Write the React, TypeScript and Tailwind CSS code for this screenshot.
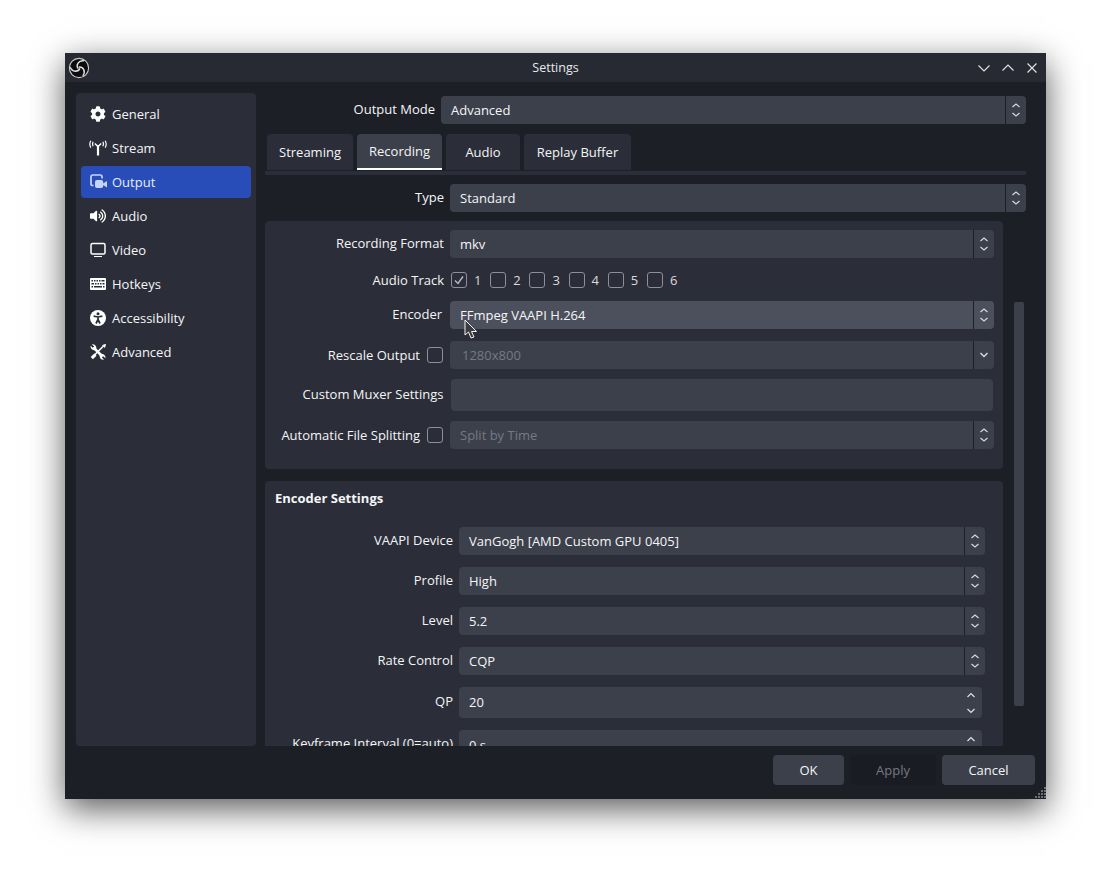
import type { ReactNode } from 'react'
import { FaCog, FaVolumeUp } from 'react-icons/fa'

function UpDown() {
  return (
    <svg width="10" height="18" viewBox="0 0 10 18" fill="none" stroke="#d6d8dc" strokeWidth="1.2">
      <path d="M1.5 6 5 3 8.5 6" />
      <path d="M1.5 12 5 15 8.5 12" />
    </svg>
  )
}

function DownOnly() {
  return (
    <svg width="10" height="8" viewBox="0 0 10 8" fill="none" stroke="#d6d8dc" strokeWidth="1.5">
      <path d="M1.5 2 5 5.5 8.5 2" />
    </svg>
  )
}

function Combo({ value, className, hover, disabled, single }: { value: string; className: string; hover?: boolean; disabled?: boolean; single?: boolean }) {
  return (
    <div className={`flex h-7 items-stretch rounded-[4px] ${hover ? 'bg-[#4c505c]' : 'bg-[#3c404b]'} ${className}`}>
      <div className={`flex-1 truncate pl-[10px] leading-[29px] ${disabled ? 'text-[#767983]' : ''}`}>{value}</div>
      <div className="flex w-[21px] items-center justify-center border-l border-[#1d1f26]">
        {single ? <DownOnly /> : <UpDown />}
      </div>
    </div>
  )
}

function Row({ label, width, className, labelPad, children }: { label: string; width: string; className?: string; labelPad?: string; children: ReactNode }) {
  return (
    <div className={`flex items-center ${className ?? ''}`}>
      <div className={`shrink-0 whitespace-nowrap text-right ${labelPad ?? 'pb-px'} ${width}`}>{label}</div>
      {children}
    </div>
  )
}

function Check({ checked }: { checked?: boolean }) {
  return (
    <div className="flex h-4 w-4 items-center justify-center rounded-[3px] border border-[#8d9099] bg-[#2b2e38]">
      {checked && (
        <svg width="12" height="12" viewBox="0 0 12 12" fill="none" stroke="#b9bbc0" strokeWidth="1.4">
          <path d="M2 6.5 5 9.5 10 2.5" />
        </svg>
      )}
    </div>
  )
}

function ObsLogo() {
  return (
    <svg width="22" height="22" viewBox="0 0 22 22">
      <circle cx="11" cy="11" r="9.6" fill="#0c0c0e" stroke="#c9cacc" strokeWidth="1.1" />
      <g fill="none" stroke="#e4e4e6" strokeWidth="1.4">
        <path d="M10.2 11.6C7.6 8 10.5 3 16 3.8" />
        <path d="M10.2 11.6C7.6 8 10.5 3 16 3.8" transform="rotate(120 11 11)" />
        <path d="M10.2 11.6C7.6 8 10.5 3 16 3.8" transform="rotate(240 11 11)" />
      </g>
    </svg>
  )
}

function StreamIcon() {
  return (
    <svg width="18" height="16" viewBox="0 0 18 16" fill="none" stroke="#fff">
      <path d="M9 5.5V15.5" strokeWidth="2.2" />
      <path d="M5.8 3.5 9 6.5 12.2 3.5" strokeWidth="1.5" />
      <path d="M4.2 1.8C3.4 3.2 3.4 4.8 4.2 6.2M1.8 0.8C0.6 3 0.6 5.6 1.8 7.6M13.8 1.8C14.6 3.2 14.6 4.8 13.8 6.2M16.2 0.8C17.4 3 17.4 5.6 16.2 7.6" strokeWidth="1.2" />
    </svg>
  )
}

function OutputIcon() {
  return (
    <svg width="17" height="16" viewBox="0 0 17 16" fill="none">
      <path d="M3.5 11.5H2.8Q1 11.5 1 9.7V2.8Q1 1 2.8 1H10.2Q12 1 12 2.8V4.5" stroke="#c6d4fb" strokeWidth="1.7" />
      <rect x="5" y="6" width="8.2" height="8" rx="2" fill="#c6d4fb" />
      <path d="M13 9.5 17 7V13.5L13 11Z" fill="#c6d4fb" />
    </svg>
  )
}

function VideoIcon() {
  return (
    <svg width="16" height="16" viewBox="0 0 16 16" fill="none" stroke="#fff">
      <rect x="1" y="1.5" width="14" height="10.5" rx="1.5" strokeWidth="1.5" />
      <path d="M4 14.5H12" strokeWidth="1" />
    </svg>
  )
}

function KeyboardIcon() {
  return (
    <svg width="16" height="12" viewBox="0 0 16 12">
      <rect width="16" height="12" rx="1" fill="#fff" />
      <g fill="#2b2e38">
        <rect x="1.5" y="2" width="1.5" height="1.5" /><rect x="4" y="2" width="1.5" height="1.5" /><rect x="6.5" y="2" width="1.5" height="1.5" /><rect x="9" y="2" width="1.5" height="1.5" /><rect x="11.5" y="2" width="3" height="1.5" />
        <rect x="1.5" y="5" width="2.5" height="1.5" /><rect x="5" y="5" width="1.5" height="1.5" /><rect x="7.5" y="5" width="1.5" height="1.5" /><rect x="10" y="5" width="1.5" height="1.5" /><rect x="12.5" y="5" width="2" height="1.5" />
        <rect x="1.5" y="8" width="1.5" height="1.5" /><rect x="4" y="8" width="8" height="1.5" /><rect x="13" y="8" width="1.5" height="1.5" />
      </g>
    </svg>
  )
}

function AccessIcon() {
  return (
    <svg width="16" height="16" viewBox="0 0 16 16">
      <circle cx="8" cy="8" r="8" fill="#fff" />
      <circle cx="8" cy="3.8" r="1.5" fill="#2b2e38" />
      <path d="M3.6 6.2 8 7 12.4 6.2M8 6.5V10M8 9.5 6 13.5M8 9.5 10 13.5" fill="none" stroke="#2b2e38" strokeWidth="1.7" />
    </svg>
  )
}

function ToolsIcon() {
  return (
    <svg width="16" height="16" viewBox="0 0 16 16" fill="none" stroke="#fff">
      <path d="M13 2.5 4 11.5" strokeWidth="1.6" />
      <path d="M15.5 0.5 14.6 3.4 12.6 1.4Z" fill="#fff" strokeWidth="1" />
      <path d="M5.4 10.6 1.8 14.2" strokeWidth="3.2" />
      <path d="M3.8 3.8 12 12" strokeWidth="2.6" />
      <path d="M5.6 6.2C3 6.8 0 4.5 0.6 1.8L2.8 3.8 4.2 2.6 2 0.4C4.8 -0.2 7 2.6 6.2 5.2ZM10.4 9.8C13 9.2 16 11.5 15.4 14.2L13.2 12.2 11.8 13.4 14 15.6C11.2 16.2 9 13.4 9.8 10.8Z" fill="#fff" stroke="none" />
    </svg>
  )
}

const navItems: { label: string; icon: ReactNode; active?: boolean }[] = [
  { label: 'General', icon: <FaCog size={16} color="#fff" /> },
  { label: 'Stream', icon: <StreamIcon /> },
  { label: 'Output', icon: <OutputIcon />, active: true },
  { label: 'Audio', icon: <FaVolumeUp size={16} color="#fff" /> },
  { label: 'Video', icon: <VideoIcon /> },
  { label: 'Hotkeys', icon: <KeyboardIcon /> },
  { label: 'Accessibility', icon: <AccessIcon /> },
  { label: 'Advanced', icon: <ToolsIcon /> },
]

const tabs = [
  { label: 'Streaming', w: 'w-[86px]' },
  { label: 'Recording', w: 'w-[85px]', active: true },
  { label: 'Audio', w: 'w-[74px]' },
  { label: 'Replay Buffer', w: 'w-[107px]' },
]

export default function App() {
  return (
    <div className="h-[876px] w-[1111px] overflow-hidden bg-white pl-[65px] pt-[53px] font-['Open_Sans',sans-serif] text-[13px] text-[#f4f5f7]">
      <div className="relative flex h-[746px] w-[981px] flex-col bg-[#1d1f26] shadow-[0_10px_32px_rgba(0,0,0,0.65)]">
        {/* Title bar */}
        <div className="flex h-[29px] shrink-0 items-center justify-between bg-[#272a33] pl-[3px] pr-[7px]">
          <div className="w-[66px]"><ObsLogo /></div>
          <span className="pt-[2px] text-[12.5px] text-[#e8e9eb]">Settings</span>
          <div className="flex items-center gap-[10px]">
            <svg width="14" height="14" viewBox="0 0 14 14" fill="none" stroke="#e4e5e7" strokeWidth="1.1"><path d="M1.5 4.5 7 10 12.5 4.5" /></svg>
            <svg width="14" height="14" viewBox="0 0 14 14" fill="none" stroke="#e4e5e7" strokeWidth="1.1"><path d="M1.5 9.5 7 4 12.5 9.5" /></svg>
            <svg width="14" height="14" viewBox="0 0 14 14" fill="none" stroke="#e4e5e7" strokeWidth="1.1"><path d="M2.5 2.5 11.5 11.5M11.5 2.5 2.5 11.5" /></svg>
          </div>
        </div>

        <div className="flex h-[664px] shrink-0">
          {/* Sidebar */}
          <div className="ml-[11px] mt-[11px] flex h-[653px] w-[180px] shrink-0 flex-col gap-[2px] rounded-[4px] bg-[#2b2e38] p-[5px]">
            {navItems.map(item => (
              <div key={item.label} className={`flex h-[32px] items-center rounded-[4px] pl-[8px] ${item.active ? 'bg-[#284cb8] text-[#e6ecff]' : ''}`}>
                <div className="flex w-[18px] justify-center">{item.icon}</div>
                <span className="ml-[5px] pt-[2px]">{item.label}</span>
              </div>
            ))}
          </div>

          {/* Right column */}
          <div className="ml-[9px] flex w-[761px] shrink-0 flex-col pt-[14px]">
            <Row label="Output Mode" width="w-[170px]">
              <Combo value="Advanced" className="ml-[6px] w-[585px]" />
            </Row>

            <div className="mt-[10px] flex gap-1 pl-[2px]">
              {tabs.map(t => (
                <div
                  key={t.label}
                  className={`flex h-[36px] items-center justify-center rounded-t-[4px] ${t.w} ${t.active ? 'border-b-2 border-white bg-[#3c404b] pt-[2px]' : 'bg-[#2b2e38] pt-[2px]'}`}
                >
                  {t.label}
                </div>
              ))}
            </div>
            <div className="mt-px h-1 bg-[#2b2e38]" />

            <Row label="Type" width="w-[179px]" className="mt-[9px]">
              <Combo value="Standard" className="ml-[6px] w-[576px]" />
            </Row>

            <div className="mt-[9px] flex h-[525px]">
              <div className="h-full w-[738px] overflow-hidden rounded-t-[4px]">
                {/* Recording group */}
                <div className="h-[248px] rounded-[4px] bg-[#2b2e38] pt-[9px]">
                  <Row label="Recording Format" width="w-[179px]">
                    <Combo value="mkv" className="ml-[6px] w-[544px]" />
                  </Row>
                  <Row label="Audio Track" width="w-[179px]" labelPad="pt-[2px]" className="mt-[14px] h-4">
                    <div className="ml-[7px] flex items-center">
                      {['1', '2', '3', '4', '5', '6'].map(n => (
                        <div key={n} className="flex w-[39.2px] items-center">
                          <Check checked={n === '1'} />
                          <span className="ml-[7px] pt-px text-[#d9dadd]">{n}</span>
                        </div>
                      ))}
                    </div>
                  </Row>
                  <Row label="Encoder" width="w-[177px]" className="mt-[13px]">
                    <Combo value="FFmpeg VAAPI H.264" hover className="ml-[8px] w-[544px]" />
                  </Row>
                  <div className="mt-3 flex items-center">
                    <Row label="Rescale Output" width="w-[155px]" labelPad="pt-px">
                      <div className="ml-[7px]"><Check /></div>
                    </Row>
                    <Combo value="1280x800" disabled single className="ml-[7px] w-[544px] pl-[2px]" />
                  </div>
                  <Row label="Custom Muxer Settings" width="w-[178.5px]" className="mt-[10px]">
                    <div className="ml-[7.5px] h-8 w-[542px] rounded-[4px] bg-[#3c404b]" />
                  </Row>
                  <div className="mt-[10px] flex items-center">
                    <Row label="Automatic File Splitting" width="w-[155px]" labelPad="pt-px">
                      <div className="ml-[7px]"><Check /></div>
                    </Row>
                    <Combo value="Split by Time" disabled className="ml-[7px] w-[544px]" />
                  </div>
                </div>

                {/* Encoder settings group */}
                <div className="mt-3 h-[300px] rounded-[4px] bg-[#2b2e38] pt-[8px]">
                  <div className="pl-[10px] font-bold leading-[18px]">Encoder Settings</div>
                  <Row label="VAAPI Device" width="w-[188px]" className="mt-[20px]">
                    <Combo value="VanGogh [AMD Custom GPU 0405]" className="ml-[6px] w-[526px]" />
                  </Row>
                  <Row label="Profile" width="w-[188px]" className="mt-3">
                    <Combo value="High" className="ml-[6px] w-[526px]" />
                  </Row>
                  <Row label="Level" width="w-[188px]" className="mt-3">
                    <Combo value="5.2" className="ml-[6px] w-[526px]" />
                  </Row>
                  <Row label="Rate Control" width="w-[188px]" className="mt-3">
                    <Combo value="CQP" className="ml-[6px] w-[526px]" />
                  </Row>
                  <Row label="QP" width="w-[188px]" className="mt-3">
                    <div className="ml-[6px] flex h-[31px] w-[523px] items-center justify-between rounded-[4px] bg-[#3c404b] pl-[10px] pr-[6px]">
                      <span>20</span>
                      <svg width="10" height="24" viewBox="0 0 10 24" fill="none" stroke="#e0e1e4" strokeWidth="1.2"><path d="M1.5 6 5 2.5 8.5 6M1.5 18 5 21.5 8.5 18" /></svg>
                    </div>
                  </Row>
                  <Row label="Keyframe Interval (0=auto)" width="w-[188px]" labelPad="pb-[3px]" className="mt-3">
                    <div className="ml-[6px] flex h-[31px] w-[523px] justify-between rounded-[4px] bg-[#3c404b] pl-[10px] pr-[6px] pt-[6px]">
                      <span>0 s</span>
                      <svg width="10" height="8" viewBox="0 0 10 8" fill="none" stroke="#e0e1e4" strokeWidth="1.2"><path d="M1.5 5 5 1.5 8.5 5" /></svg>
                    </div>
                  </Row>
                </div>
              </div>

              {/* Scrollbar */}
              <div className="pl-[11px] pt-[81px]">
                <div className="h-[404px] w-[10px] rounded-[2px] bg-[#3c404b]" />
              </div>
            </div>
          </div>
        </div>

        {/* Footer buttons */}
        <div className="flex flex-1 justify-end gap-[6px] pr-[11px] pt-[9px]">
          <div className="flex h-[30px] w-[71px] items-center justify-center rounded-[4px] bg-[#3c404b] pt-[2px]">OK</div>
          <div className="flex h-[30px] w-[86px] items-center justify-center rounded-[4px] bg-[#1a1c23] pt-[2px] text-[#767983]">Apply</div>
          <div className="flex h-[30px] w-[93px] items-center justify-center rounded-[4px] bg-[#3c404b] pt-[2px]">Cancel</div>
        </div>

        {/* Resize grip */}
        <svg className="absolute bottom-0 right-0" width="12" height="12" viewBox="0 0 12 12" fill="#6d6f76">
          <rect x="10" y="0" width="2" height="2" />
          <rect x="7" y="3" width="2" height="2" /><rect x="10" y="3" width="2" height="2" />
          <rect x="4" y="6" width="2" height="2" /><rect x="7" y="6" width="2" height="2" /><rect x="10" y="6" width="2" height="2" />
          <rect x="1" y="9" width="2" height="2" /><rect x="4" y="9" width="2" height="2" /><rect x="7" y="9" width="2" height="2" /><rect x="10" y="9" width="2" height="2" />
        </svg>

        {/* Mouse pointer */}
        <svg className="absolute left-[399px] top-[266px]" width="14" height="21" viewBox="0 0 14 21">
          <path d="M1 1V16L4.5 13 7 19 10 18 7.5 12.5H12.5Z" fill="#3a3c42" stroke="#f2f2f2" strokeWidth="1" />
        </svg>
      </div>
    </div>
  )
}
